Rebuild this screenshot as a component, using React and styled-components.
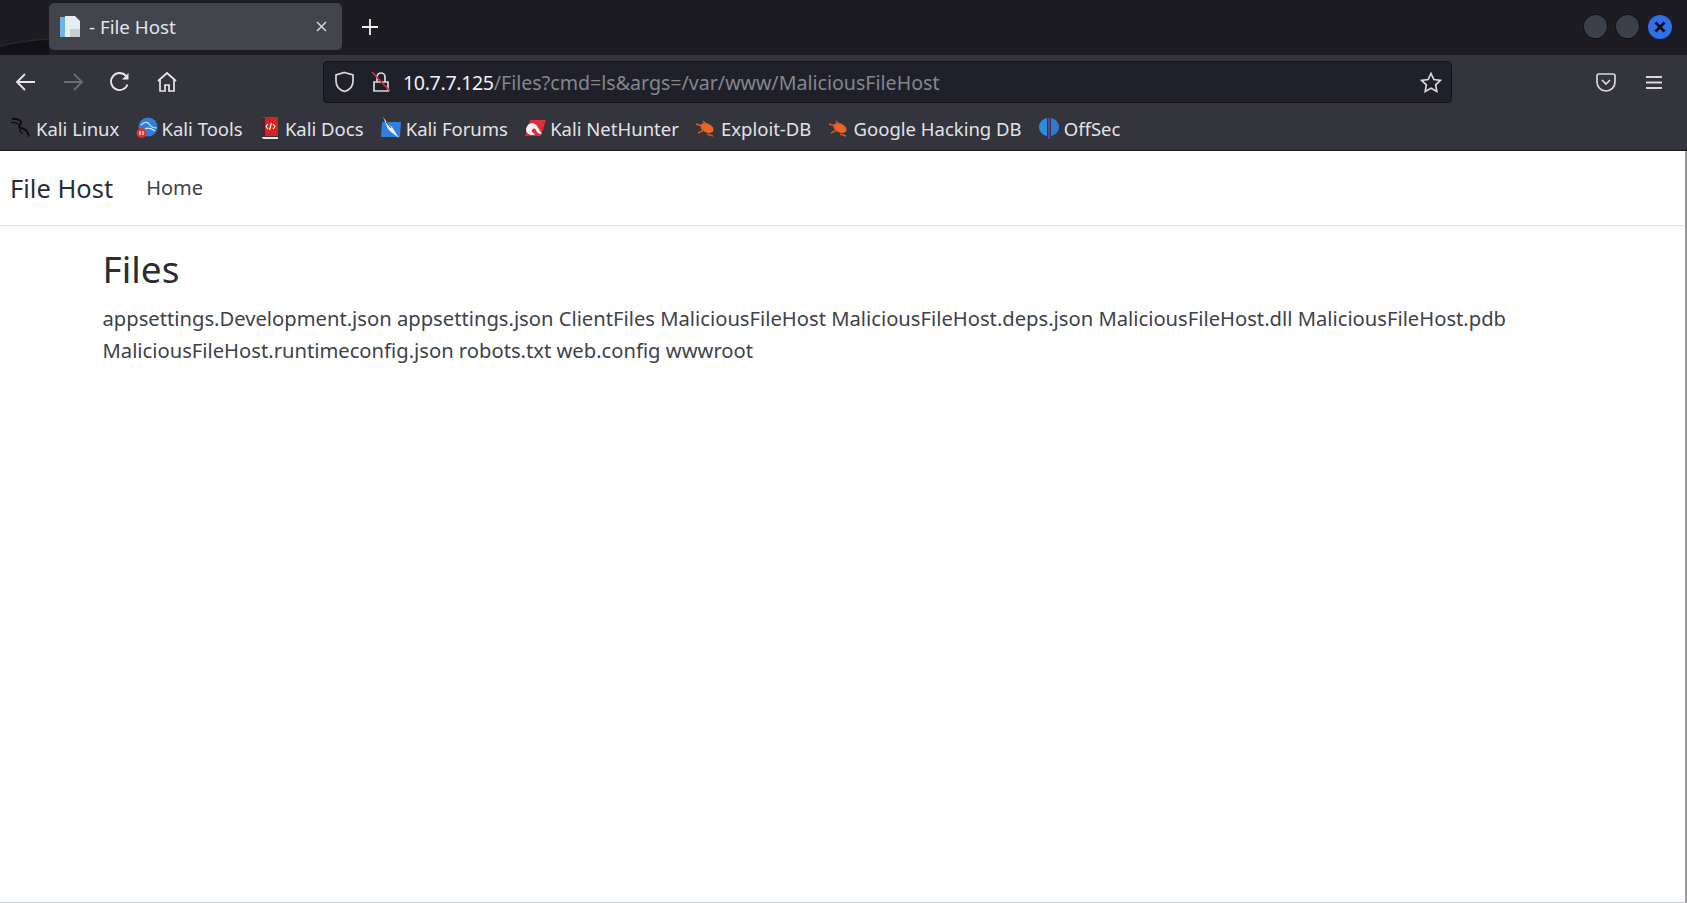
import React from "react";
import styled, { createGlobalStyle } from "styled-components";

const GlobalStyle = createGlobalStyle`
  html, body {
    margin: 0;
    height: 100%;
    background: #fff;
  }
  #root {
    height: 100%;
  }
`;

const bookmarks = [
  { label: "Kali Linux", icon: "dragon" },
  { label: "Kali Tools", icon: "tools" },
  { label: "Kali Docs", icon: "docs" },
  { label: "Kali Forums", icon: "forums" },
  { label: "Kali NetHunter", icon: "hunter" },
  { label: "Exploit-DB", icon: "bug" },
  { label: "Google Hacking DB", icon: "bug" },
  { label: "OffSec", icon: "offsec" },
];

const files =
  "appsettings.Development.json appsettings.json ClientFiles MaliciousFileHost MaliciousFileHost.deps.json MaliciousFileHost.dll MaliciousFileHost.pdb MaliciousFileHost.runtimeconfig.json robots.txt web.config wwwroot";

const BookmarkIcon = ({ type }) => {
  if (type === "dragon") {
    return (
      <svg width="22" height="22" viewBox="0 0 22 22" fill="none">
        <path d="M2 2c3-.5 6 0 8 1.500 2 1.500 1 3-.5 4.500-1 1.500 0 3 3 3.500 3 .5 5 2 6.500 8" stroke="#0c0c10" strokeWidth="1.900" />
        <path d="M1 5.500c3-.5 5 0 7 1.500M10 12c-.5 2 .5 3.500 3 4.500" stroke="#0c0c10" strokeWidth="1.300" />
      </svg>
    );
  }
  if (type === "tools") {
    return (
      <svg width="22" height="22" viewBox="0 0 22 22">
        <circle cx="12" cy="10" r="9.500" fill="#2f7fd8" />
        <path d="M5 8c4-4 7-3 9 0s4 3 7 3M9 12c3-2 6-1 10 2" stroke="#cfe6fb" strokeWidth="1.200" fill="none" />
        <circle cx="5.500" cy="16" r="5" fill="#e0312c" />
        <path d="M4 14v4M7 14v4" stroke="#fff" strokeWidth="1.100" />
      </svg>
    );
  }
  if (type === "docs") {
    return (
      <svg width="20" height="24" viewBox="0 0 20 24">
        <path d="M2 3c0-1 1-2 2-2h14v19H2z" fill="#d5231f" />
        <path d="M2 2h3v19H2z" fill="#4a2230" />
        <path d="M2 21h16v2H4c-1 0-2-1-2-2z" fill="#e8e8ea" />
        <path d="M8 8l-2 2.500 2 2.500M13 8l2 2.500-2 2.500M11.500 7l-2 7" stroke="#fff" strokeWidth="1.200" fill="none" />
      </svg>
    );
  }
  if (type === "forums") {
    return (
      <svg width="22" height="24" viewBox="0 0 22 24">
        <path d="M2 6h19l-1 15H1z" fill="#2f7fe0" />
        <path d="M3 1l5 7 4 3 7 11-8-6-3-3z" fill="#eef0f3" />
        <path d="M6 6l5 6" stroke="#3a3b44" strokeWidth="1" />
      </svg>
    );
  }
  if (type === "hunter") {
    return (
      <svg width="22" height="22" viewBox="0 0 22 22">
        <path d="M6 3h16l-5 16H1z" fill="#d9303a" />
        <path d="M2 13c0-5 5-8 9-6 3 2 4 6 7 10-3 0-5-1-6-4-1-2-3-2-4 0-1 1 0 3 3 4l-1 1c-5 0-8-2-8-5z" fill="#f1f1f3" />
      </svg>
    );
  }
  if (type === "bug") {
    return (
      <svg width="22" height="20" viewBox="0 0 22 20">
        <ellipse cx="12" cy="10" rx="7" ry="4.500" fill="#e8642a" transform="rotate(25 12 10)" />
        <path d="M1 6l6 2M3 15l6-3M12 16l6 2M8 3l3 3" stroke="#d9591f" strokeWidth="1.400" />
      </svg>
    );
  }
  return (
    <svg width="20" height="24" viewBox="0 0 20 24">
      <path d="M8 2C3 3 0 7 0 11s3 8 8 9z" fill="#2a8fd6" />
      <path d="M12 2c5 1 8 5 8 9s-3 8-8 9z" fill="#2f7bd0" />
      <path d="M10 2v21" stroke="#6a3fd0" strokeWidth="1.600" />
    </svg>
  );
};

const App = () => {
  return (
    <Window>
      <GlobalStyle />
      <TabStrip>
        <Swoosh width="49" height="55" viewBox="0 0 49 55" fill="none">
          <path d="M0 47c16-4 32-6 49-7v15H0z" fill="#111116" />
          <path d="M0 46c16-4 32-6 49-7" stroke="#2a2b31" strokeWidth="1" />
        </Swoosh>
        <Tab>
          <TabFavicon width="22" height="24" viewBox="0 0 22 24">
            <path d="M1 2h5v20H1z" fill="#6fb4e8" />
            <path d="M6 1h10l5 5v16H6z" fill="#e8edf1" />
            <path d="M11 14h10v8H11z" fill="#c6ced6" />
          </TabFavicon>
          <TabTitle>- File Host</TabTitle>
          <TabClose width="13" height="13" viewBox="0 0 13 13">
            <path d="M2 2l9 9M11 2l-9 9" stroke="#d5d6da" strokeWidth="1.500" />
          </TabClose>
        </Tab>
        <NewTab width="18" height="18" viewBox="0 0 18 18">
          <path d="M9 1v16M1 9h16" stroke="#f0f0f3" strokeWidth="1.800" />
        </NewTab>
        <WindowButtons>
          <WindowButton />
          <WindowButton />
          <CloseButton>
            <svg width="14" height="14" viewBox="0 0 14 14">
              <path d="M2.500 2.500l9 9M11.500 2.500l-9 9" stroke="#0b0c12" strokeWidth="2.600" />
            </svg>
          </CloseButton>
        </WindowButtons>
      </TabStrip>

      <Toolbar>
        <NavIcons>
          <NavIcon>
            <svg width="22" height="20" viewBox="0 0 22 20" fill="none" stroke="#e6e6ea" strokeWidth="1.800">
              <path d="M20 10H2M10 2l-8 8 8 8" />
            </svg>
          </NavIcon>
          <NavIcon>
            <svg width="22" height="20" viewBox="0 0 22 20" fill="none" stroke="#6d6e75" strokeWidth="1.800">
              <path d="M2 10h18M12 2l8 8-8 8" />
            </svg>
          </NavIcon>
          <NavIcon>
            <svg width="22" height="22" viewBox="0 0 22 22" fill="none" stroke="#e6e6ea" strokeWidth="1.800">
              <path d="M18.500 13.500a8.500 8.500 0 1 1-1.500-8.500" />
              <path d="M19.500 2v6.500H13" fill="#e6e6ea" stroke="none" />
            </svg>
          </NavIcon>
          <NavIcon>
            <svg width="22" height="22" viewBox="0 0 22 22" fill="none" stroke="#e6e6ea" strokeWidth="1.700">
              <path d="M2 10l9-8 9 8M4 8.500V20h5v-6h4v6h5V8.500" />
            </svg>
          </NavIcon>
        </NavIcons>
        <UrlBar>
          <svg width="21" height="22" viewBox="0 0 21 22" fill="none" stroke="#d8d8dc" strokeWidth="1.700">
            <path d="M10.500 1.500l8.500 2.500v6c0 5-3.500 9-8.500 10.500C5.500 19 2 15 2 10V4z" />
          </svg>
          <LockIcon width="20" height="24" viewBox="0 0 20 24" fill="none">
            <path d="M3 12h14v9H3zM6 12V7a4 4 0 0 1 8 0v5" stroke="#d8d8dc" strokeWidth="1.700" />
            <path d="M1 2l18 19" stroke="#d9304a" strokeWidth="1.700" />
          </LockIcon>
          <UrlText>
            <UrlHost>10.7.7.125</UrlHost>/Files?cmd=ls&amp;args=/var/www/MaliciousFileHost
          </UrlText>
          <svg width="22" height="21" viewBox="0 0 22 21" fill="none" stroke="#d8d8dc" strokeWidth="1.700">
            <path d="M11 1.500l2.900 6 6.500.9-4.700 4.500 1.100 6.500-5.800-3.100-5.800 3.100 1.100-6.500L1.600 8.400l6.500-.9z" />
          </svg>
        </UrlBar>
        <ToolbarEnd>
          <svg width="20" height="19" viewBox="0 0 20 19" fill="none" stroke="#d8d8dc" strokeWidth="1.700">
            <path d="M1 3c0-1 1-2 2-2h14c1 0 2 1 2 2v6c0 5-4 9-9 9S1 14 1 9z" />
            <path d="M6 7l4 4 4-4" />
          </svg>
          <svg width="18" height="15" viewBox="0 0 18 15" stroke="#d8d8dc" strokeWidth="1.800">
            <path d="M1 2h16M1 7.500h16M1 13h16" />
          </svg>
        </ToolbarEnd>
      </Toolbar>

      <BookmarksBar>
        {bookmarks.map((item) => (
          <Bookmark key={item.label}>
            <BookmarkSlot>
              <BookmarkIcon type={item.icon} />
            </BookmarkSlot>
            {item.label}
          </Bookmark>
        ))}
      </BookmarksBar>

      <Page>
        <Navbar>
          <Brand>File Host</Brand>
          <NavLink>Home</NavLink>
        </Navbar>
        <Main>
          <Heading>Files</Heading>
          <FileList>{files}</FileList>
        </Main>
      </Page>
    </Window>
  );
};

const Window = styled.div`
  height: 100%;
  display: flex;
  flex-direction: column;
  font-family: "Noto Sans", sans-serif;
  overflow: hidden;
`;

const TabStrip = styled.div`
  position: relative;
  height: 55px;
  flex: none;
  box-sizing: border-box;
  padding: 3px 10px 5px 49px;
  display: flex;
  align-items: center;
  background: #1c1c22;
`;

const Swoosh = styled.svg`
  position: absolute;
  left: 0;
  top: 0;
`;

const Tab = styled.div`
  position: relative;
  width: 293px;
  height: 47px;
  box-sizing: border-box;
  padding: 0 14px 0 10px;
  display: flex;
  align-items: center;
  border-radius: 5px;
  background: #42444c;
`;

const TabFavicon = styled.svg`
  flex: none;
  margin-right: 8px;
`;

const TabTitle = styled.span`
  flex: 1;
  font-size: 18.800px;
  color: #e4e4e8;
`;

const TabClose = styled.svg`
  flex: none;
`;

const NewTab = styled.svg`
  flex: none;
  margin-left: 19px;
`;

const WindowButtons = styled.div`
  margin-left: auto;
  display: flex;
  align-items: center;
  gap: 9px;
  padding-right: 5px;
`;

const WindowButton = styled.div`
  width: 23px;
  height: 23px;
  border-radius: 50%;
  background: #3c404c;
  box-shadow: 0 0 0 1px #101014;
`;

const CloseButton = styled.div`
  width: 24px;
  height: 24px;
  display: flex;
  align-items: center;
  justify-content: center;
  border-radius: 50%;
  background: #2f6fe8;
`;

const Toolbar = styled.div`
  height: 53px;
  flex: none;
  box-sizing: border-box;
  padding: 6px 24px 0 15px;
  display: flex;
  align-items: flex-start;
  background: #33343c;
`;

const NavIcons = styled.div`
  width: 308px;
  height: 42px;
  flex: none;
  display: flex;
  align-items: center;
  gap: 25px;
`;

const NavIcon = styled.div`
  width: 22px;
  display: flex;
  justify-content: center;
`;

const UrlBar = styled.div`
  width: 1129px;
  height: 42px;
  flex: none;
  box-sizing: border-box;
  padding: 0 9px 0 10px;
  display: flex;
  align-items: center;
  border: 1px solid #14141a;
  border-radius: 4px;
  background: #1f2029;
`;

const LockIcon = styled.svg`
  flex: none;
  margin-left: 16px;
`;

const UrlText = styled.div`
  flex: 1;
  margin-left: 12px;
  font-size: 19.600px;
  color: #85868d;
  white-space: nowrap;
`;

const UrlHost = styled.span`
  color: #f1f1f4;
  letter-spacing: -0.350px;
`;

const ToolbarEnd = styled.div`
  flex: 1;
  height: 42px;
  display: flex;
  align-items: center;
  justify-content: flex-end;
  gap: 29px;
`;

const BookmarksBar = styled.div`
  height: 43px;
  flex: none;
  box-sizing: border-box;
  padding: 0 0 2px 10px;
  display: flex;
  align-items: center;
  gap: 16.200px;
  background: #33343c;
  border-bottom: 1px solid #1a1a1e;
`;

const Bookmark = styled.div`
  display: flex;
  align-items: center;
  gap: 4px;
  font-size: 18.500px;
  color: #e3e3e6;
  white-space: nowrap;
`;

const BookmarkSlot = styled.span`
  width: 22px;
  display: flex;
  justify-content: center;
`;

const Page = styled.div`
  flex: 1;
  box-sizing: border-box;
  background: #fff;
  border-right: 2px solid #9a9a9a;
  border-bottom: 1px solid #c8ccd0;
`;

const Navbar = styled.nav`
  height: 75px;
  box-sizing: border-box;
  padding: 0 10px;
  display: flex;
  align-items: center;
  border-bottom: 1px solid #dfe3e6;
  box-shadow: 0 2px 6px rgba(0, 0, 0, 0.05);
`;

const Brand = styled.div`
  font-size: 25.500px;
  color: #2a2e33;
`;

const NavLink = styled.div`
  margin-left: 33px;
  margin-bottom: 1px;
  font-size: 20px;
  color: #3d4349;
`;

const Main = styled.main`
  padding: 22px 175px 0 102.500px;
`;

const Heading = styled.h1`
  margin: 0 0 13px;
  font-size: 37px;
  font-weight: 400;
  line-height: 42px;
  color: #2a2e33;
`;

const FileList = styled.p`
  margin: 0;
  font-size: 20.200px;
  line-height: 31.500px;
  color: #3d4349;
`;

export default App;
